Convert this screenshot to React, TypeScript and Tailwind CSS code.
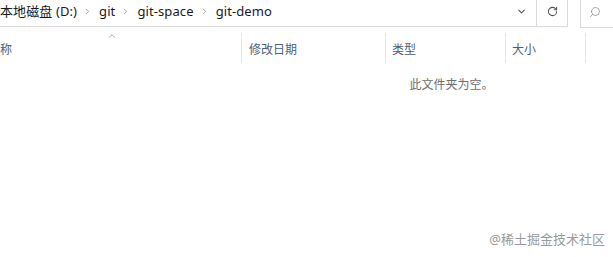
import { ChevronRight, ChevronDown, ChevronUp, RotateCw, Search } from 'lucide-react';

const crumbs = ['本地磁盘 (D:)', 'git', 'git-space', 'git-demo'];

const columns = [
  { label: '称', width: 'w-[242px]', pad: 'pl-0' },
  { label: '修改日期', width: 'w-[144px]', pad: 'pl-[7px]' },
  { label: '类型', width: 'w-[120px]', pad: 'pl-[6px]' },
  { label: '大小', width: 'w-[80px]', pad: 'pl-[6px]' },
];

export default function App() {
  return (
    <div
      className="w-[613px] h-[257px] bg-white relative overflow-hidden text-[#1a1a1a]"
      style={{ fontFamily: '"Noto Sans", "Noto Sans CJK SC", sans-serif' }}
    >
      {/* 地址栏 */}
      <div className="flex h-[27px]">
        <div className="flex flex-1 items-center border-b border-[#d9d9d9] h-[27px]">
          <div className="flex flex-1 items-center text-[13px] -mt-[3px]">
            {crumbs.map((c, i) => (
              <div key={c} className="flex items-center">
                {i > 0 && (
                  <ChevronRight className="w-[9px] h-[9px] text-[#888] ml-[6px] mr-[7px]" strokeWidth={2} />
                )}
                <span className="tracking-[0.1px]">{c}</span>
              </div>
            ))}
          </div>
          <div className="w-[30px] flex items-center justify-center -mt-[3px]">
            <ChevronDown className="w-[11px] h-[11px] text-[#555]" strokeWidth={2.5} />
          </div>
          <div className="w-[32px] h-[27px] border-l border-r border-[#d9d9d9] flex items-center justify-center">
            <RotateCw className="w-[11px] h-[11px] text-[#555] -mt-[3px]" strokeWidth={2.2} />
          </div>
        </div>
        <div className="w-[12px]" />
        <div className="w-[33px] h-[28px] border-l border-b border-[#d9d9d9] flex items-center pl-[8px]">
          <Search className="w-[12px] h-[12px] text-[#8a8a8a] -scale-x-100 -mt-[3px]" strokeWidth={1.5} />
        </div>
      </div>

      {/* 列标题 */}
      <div className="flex h-[30px] mt-[6px] relative">
        <ChevronUp className="absolute left-[107px] -top-[2px] w-[10px] h-[10px] text-[#777]" strokeWidth={1.5} />
        {columns.map((col) => (
          <div
            key={col.label}
            className={`${col.width} ${col.pad} h-[30px] pt-[3px] border-r border-[#e5e5e5] flex items-center text-[12px] text-[#4c607a]`}
          >
            {col.label}
          </div>
        ))}
      </div>

      {/* 空文件夹提示 */}
      <div className="flex justify-center pl-[290px] mt-[13px]">
        <span className="text-[12px] text-[#6d6d6d]">此文件夹为空。</span>
      </div>

      <div className="absolute right-[8px] bottom-[8px] text-[13px] text-[#9a9a9a]">
        @稀土掘金技术社区
      </div>
    </div>
  );
}
